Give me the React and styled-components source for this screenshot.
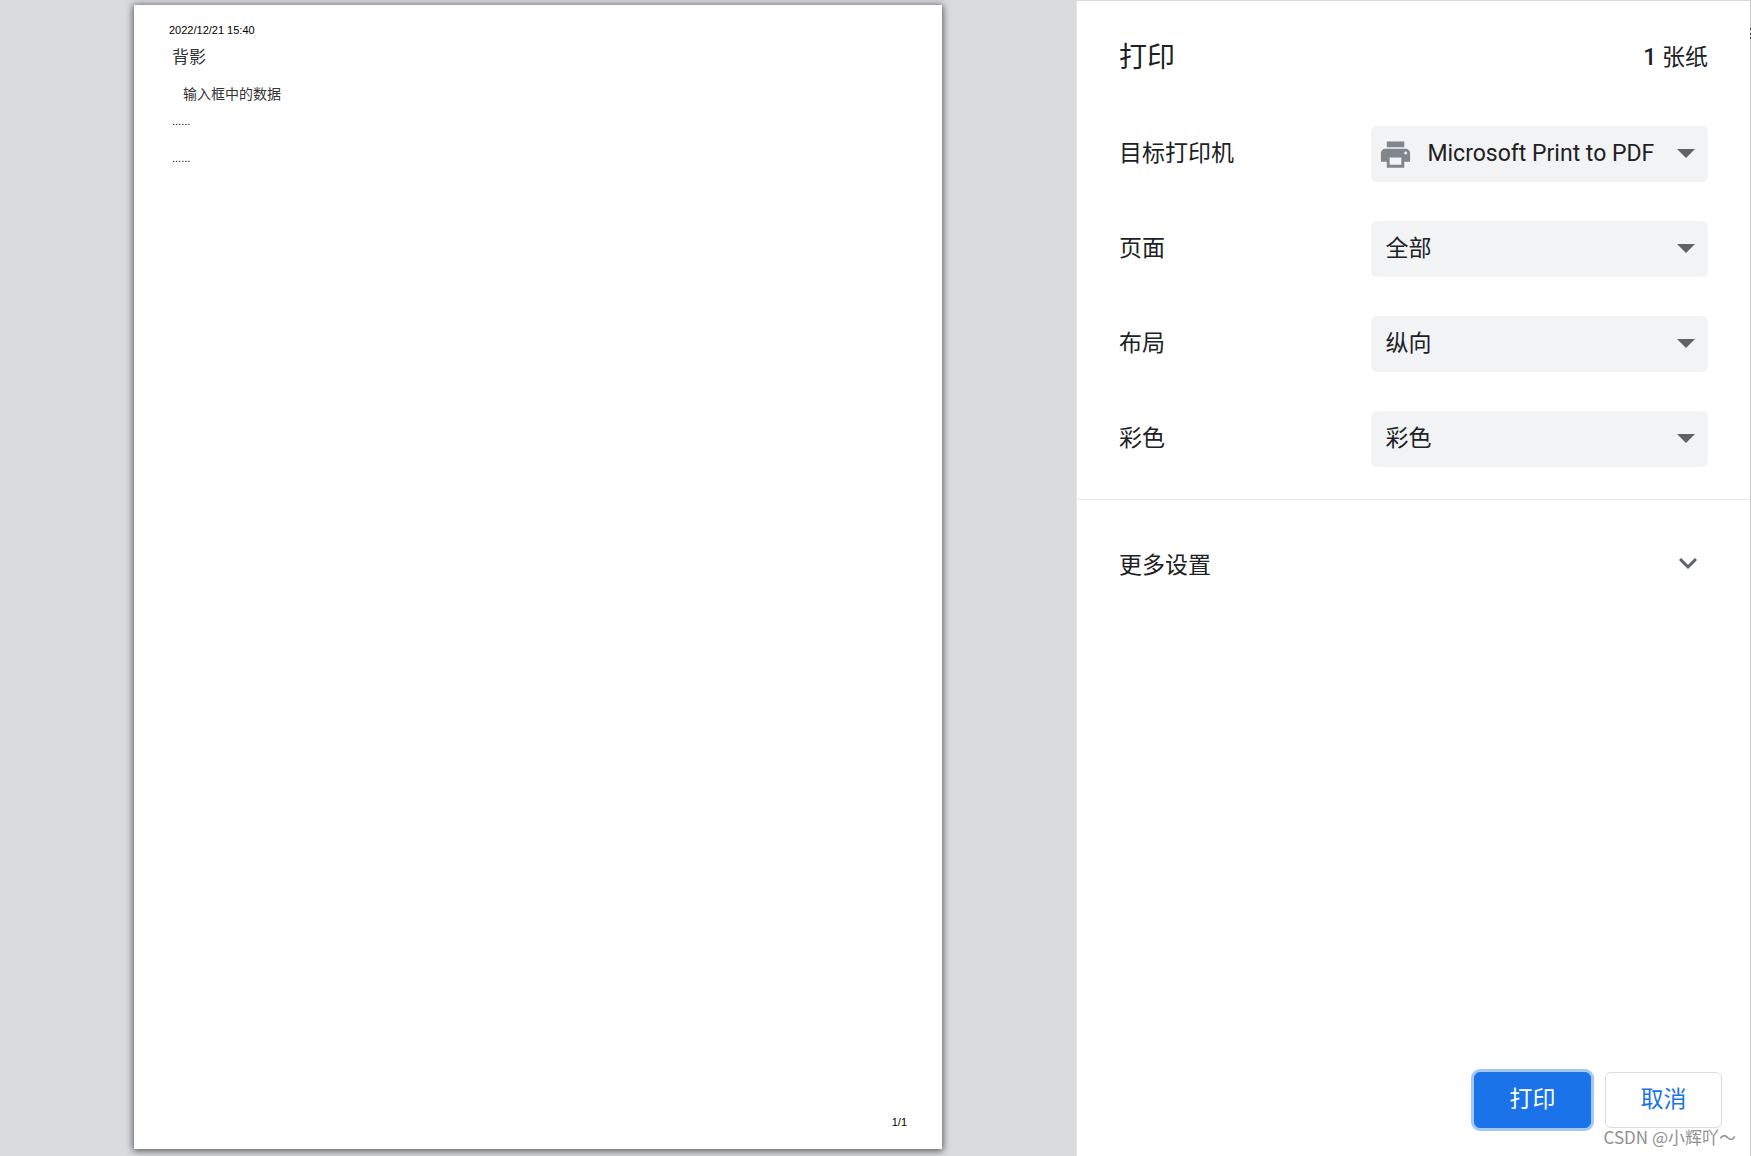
import React, { useState } from 'react';
import styled, { createGlobalStyle } from 'styled-components';

const GlobalStyle = createGlobalStyle`
  *,
  *::before,
  *::after {
    box-sizing: border-box;
  }

  body {
    margin: 0;
    color: #202124;
    font-family: Roboto, 'Noto Sans CJK SC', sans-serif;
    font-size: 23px;
    line-height: 32px;
  }

  button,
  select {
    color: inherit;
    font: inherit;
  }
`;

const Dialog = styled.main`
  display: grid;
  grid-template-columns: minmax(0, 1fr) 38.55%;
  min-height: 100vh;
  border-top: 1px solid #d9d9d9;
`;

const Preview = styled.section`
  display: flex;
  justify-content: center;
  align-items: flex-start;
  padding: 4px 0 7px;
  background: #dadbdf;
`;

const Sheet = styled.article`
  display: flex;
  flex-direction: column;
  height: calc(100vh - 12px);
  padding: 18px 35px 20px;
  aspect-ratio: 808 / 1144;
  background: #fff;
  box-shadow: 0 1px 7px 1px rgba(0, 0, 0, 0.6);
  color: #000;
  font-family: 'Liberation Sans', 'Noto Sans CJK SC', sans-serif;
  font-size: 11px;
  line-height: 14px;
`;

const SheetBody = styled.div`
  flex: 1;
  padding: 9px 3px;
`;

const SheetTitle = styled.h2`
  margin: 0 0 14px;
  color: #333;
  font-size: 17px;
  font-weight: 400;
  line-height: 24px;
`;

const SheetText = styled.p`
  margin: 0 0 10px;
  padding-left: 11px;
  color: #333;
  font-size: 14px;
  line-height: 20px;
`;

const SheetDots = styled.p`
  margin: 0 0 23px;
`;

const SheetNumber = styled.footer`
  text-align: right;
`;

const Panel = styled.section`
  position: relative;
  display: flex;
  flex-direction: column;
  border-left: 1px solid #e8e8eb;
  border-right: 1px solid #c8c8c8;
  background: #fff;
`;

const Header = styled.header`
  display: flex;
  justify-content: space-between;
  align-items: center;
  padding: 37px 42px 0;
`;

const Title = styled.h1`
  margin: 0;
  font-size: 28px;
  font-weight: 400;
  line-height: 40px;
`;

const Sheets = styled.span`
  b {
    font-weight: 500;
  }
`;

const Settings = styled.div`
  display: grid;
  gap: 39px;
  padding: 48px 42px 32px;
  border-bottom: 1px solid #e8e8e8;
`;

const Row = styled.div`
  display: grid;
  grid-template-columns: 3fr 4fr;
  align-items: center;
`;

const SelectBox = styled.div`
  position: relative;
  display: grid;

  svg {
    position: absolute;
    pointer-events: none;
  }
`;

const Select = styled.select`
  width: 100%;
  height: 56px;
  padding: 0 48px 0 ${({ $icon }) => ($icon ? '56px' : '14px')};
  border: 0;
  border-radius: 6px;
  appearance: none;
  background: #f1f3f4;
`;

const Arrow = styled.svg`
  top: 23px;
  right: 13px;
  width: 18px;
  height: 9px;
  fill: #5f6368;
`;

const Printer = styled.svg`
  top: 11px;
  left: 7px;
  width: 35px;
  height: 35px;
  fill: #80868b;
`;

const MoreButton = styled.button`
  display: flex;
  justify-content: space-between;
  align-items: center;
  padding: 50px 53px 48px 42px;
  border: 0;
  background: none;
  text-align: left;
  cursor: pointer;
`;

const Chevron = styled.svg`
  width: 18px;
  height: 16px;
  fill: none;
  stroke: #5f6368;
  stroke-width: 3;
`;

const Actions = styled.footer`
  display: flex;
  justify-content: flex-end;
  gap: 14px;
  margin-top: auto;
  padding: 28px;
`;

const Button = styled.button`
  width: 117px;
  height: 56px;
  padding: 0;
  border: 1px solid ${({ $primary }) => ($primary ? '#1a73e8' : '#dadce0')};
  border-radius: 6px;
  background: ${({ $primary }) => ($primary ? '#1a73e8' : '#fff')};
  box-shadow: ${({ $primary }) => ($primary ? '0 0 0 3px #a3c7f6' : 'none')};
  color: ${({ $primary }) => ($primary ? '#fff' : '#1a73e8')};
  cursor: pointer;
`;

const Watermark = styled.span`
  position: absolute;
  right: 14px;
  bottom: 7px;
  color: #909090;
  font-family: 'Noto Sans CJK SC', sans-serif;
  font-size: 17px;
  line-height: 24px;
  text-shadow: 1px 1px 0 #fff;
  white-space: nowrap;
`;

/* menu dots of the window behind, showing at the edge */
const EdgeDots = styled.svg`
  position: absolute;
  top: 27px;
  right: -1px;
  width: 1px;
  height: 12px;
  fill: #4a4d51;
`;

const fields = [
  {
    id: 'printer',
    label: '目标打印机',
    icon: true,
    options: ['Microsoft Print to PDF', '另存为 PDF'],
  },
  { id: 'pages', label: '页面', options: ['全部', '仅限奇数页', '仅限偶数页'] },
  { id: 'layout', label: '布局', options: ['纵向', '横向'] },
  { id: 'color', label: '彩色', options: ['彩色', '黑白'] },
];

const Field = ({ id, label, options, icon }) => (
  <Row>
    <label htmlFor={id}>{label}</label>
    <SelectBox>
      <Select id={id} $icon={icon}>
        {options.map(option => (
          <option key={option}>{option}</option>
        ))}
      </Select>
      {icon && (
        <Printer viewBox="0 0 24 24" aria-hidden="true">
          <path d="M19 8H5c-1.66 0-3 1.34-3 3v6h4v4h12v-4h4v-6c0-1.66-1.34-3-3-3zm-3 11H8v-5h8v5zm3-7c-.55 0-1-.45-1-1s.45-1 1-1 1 .45 1 1-.45 1-1 1zm-1-9H6v4h12V3z" />
        </Printer>
      )}
      <Arrow viewBox="0 0 18 9" aria-hidden="true">
        <path d="M0 0h18L9 9z" />
      </Arrow>
    </SelectBox>
  </Row>
);

const App = () => {
  const [expanded, setExpanded] = useState(false);

  return (
    <>
      <GlobalStyle />
      <Dialog>
        <Preview>
          <Sheet>
            <time dateTime="2022-12-21T15:40">2022/12/21 15:40</time>
            <SheetBody>
              <SheetTitle>背影</SheetTitle>
              <SheetText>输入框中的数据</SheetText>
              <SheetDots>......</SheetDots>
              <SheetDots>......</SheetDots>
            </SheetBody>
            <SheetNumber>1/1</SheetNumber>
          </Sheet>
        </Preview>

        <Panel>
          <Header>
            <Title>打印</Title>
            <Sheets>
              <b>1</b> 张纸
            </Sheets>
          </Header>

          <Settings>
            {fields.map(field => (
              <Field key={field.id} {...field} />
            ))}
          </Settings>

          <MoreButton
            type="button"
            aria-expanded={expanded}
            onClick={() => setExpanded(!expanded)}
          >
            更多设置
            <Chevron viewBox="0 0 18 16" aria-hidden="true">
              <path d="M1 1l8 8 8-8" />
            </Chevron>
          </MoreButton>

          <Actions>
            <Button type="button" $primary>
              打印
            </Button>
            <Button type="button">取消</Button>
          </Actions>

          <Watermark>CSDN @小辉吖～</Watermark>
          <EdgeDots viewBox="0 0 1 12" aria-hidden="true">
            <path d="M0 0h1v2H0zM0 5h1v2H0zM0 9h1v2H0z" />
          </EdgeDots>
        </Panel>
      </Dialog>
    </>
  );
};

export default App;
